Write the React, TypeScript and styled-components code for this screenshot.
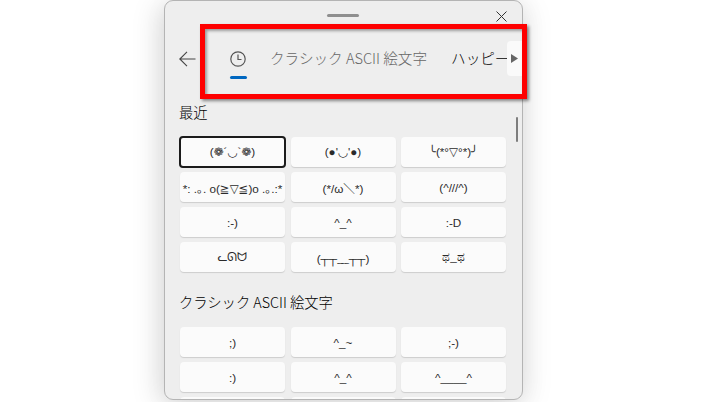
import React from "react";
import styled, { createGlobalStyle } from "styled-components";

const Global = createGlobalStyle`
  html, body { margin: 0; padding: 0; background: #fff; }
  body { width: 716px; height: 402px; overflow: hidden; font-family: "Noto Sans CJK JP", "Noto Sans", sans-serif; }
`;

const Stage = styled.div`
  position: relative;
  width: 716px;
  height: 402px;
  overflow: hidden;
  padding-left: 164px;
  box-sizing: border-box;
`;

const Panel = styled.div`
  width: 359px;
  height: 400px;
  box-sizing: border-box;
  background: #eeeeee;
  border: 1px solid #b4b4b4;
  border-radius: 9px;
  box-shadow: -6px 4px 28px rgba(0, 0, 0, 0.13), 6px 4px 28px rgba(0, 0, 0, 0.08);
  overflow: hidden;
  display: flex;
  flex-direction: column;
  position: relative;
`;

const TitleBar = styled.div`
  height: 28px;
  flex: none;
  display: flex;
  align-items: center;
  justify-content: center;
  position: relative;
`;

const Handle = styled.div`
  width: 32px;
  height: 3px;
  border-radius: 2px;
  background: #8f8f8f;
  margin-top: 1px;
  margin-right: 1px;
`;

const CloseButton = styled.div`
  position: absolute;
  top: 10px;
  right: 15px;
  width: 11px;
  height: 11px;
  color: #333;
  display: flex;
`;

const TabBar = styled.div`
  height: 68px;
  flex: none;
  display: flex;
  align-items: flex-start;
  position: relative;
  overflow: hidden;
`;

const BackButton = styled.div`
  width: 17px;
  height: 16px;
  margin: 22px 0 0 14px;
  color: #444;
  flex: none;
  display: flex;
`;

const ClockTab = styled.div`
  width: 18px;
  margin: 22px 0 0 33px;
  flex: none;
  display: flex;
  flex-direction: column;
  align-items: center;
  color: #555;
`;

const Underline = styled.div`
  width: 17px;
  height: 3px;
  margin-top: 9px;
  border-radius: 2px;
  background: #0067c0;
`;

const TextTab = styled.div<{ $active?: boolean }>`
  flex: none;
  font-size: 14.6px;
  font-weight: 300;
  line-height: 20px;
  margin-top: 19px;
  margin-left: ${(p) => (p.$active ? "24px" : "23px")};
  color: ${(p) => (p.$active ? "#000" : "#666")};
  white-space: nowrap;
`;

const ScrollArrow = styled.div`
  position: absolute;
  right: 0;
  top: 12px;
  width: 15px;
  height: 35px;
  background: #fafafa;
  border-radius: 4px 0 0 4px;
  display: flex;
  align-items: center;
  justify-content: center;
  color: #666;
`;

const Body = styled.div`
  flex: 1;
  min-height: 0;
  padding: 5px 15px 0;
  position: relative;
`;

const Heading = styled.div<{ $gap?: number }>`
  font-size: 14.3px;
  font-weight: 300;
  line-height: 20px;
  color: #000;
  margin-left: -1px;
  margin-top: ${(p) => p.$gap ?? 0}px;
  margin-bottom: 15px;
`;

const Grid = styled.div`
  display: grid;
  grid-template-columns: 105px 105px 105px;
  column-gap: 5.5px;
  row-gap: 5px;
`;

const Cell = styled.div<{ $selected?: boolean }>`
  height: ${(p) => (p.$selected ? "32px" : "30px")};
  margin: ${(p) => (p.$selected ? "-1px" : "0")};
  box-sizing: border-box;
  background: #fbfbfb;
  border-radius: 4px;
  border: ${(p) => (p.$selected ? "2px solid #1b1b1b" : "none")};
  box-shadow: ${(p) => (p.$selected ? "none" : "0 1px 1px rgba(0,0,0,0.14)")};
  display: flex;
  align-items: center;
  justify-content: center;
  font-family: "Liberation Sans", "DejaVu Sans", "Noto Sans CJK JP", sans-serif;
  font-size: 11.7px;
  color: #2a2a2a;
  white-space: nowrap;
  overflow: hidden;
`;

const ScrollThumb = styled.div`
  position: absolute;
  top: 20px;
  right: 4px;
  width: 2px;
  height: 25px;
  background: #7d7d7d;
  border-radius: 1px;
`;

const Highlight = styled.div`
  position: absolute;
  left: 200px;
  top: 24px;
  width: 317px;
  height: 65px;
  border: 5px solid #fe0000;
  box-shadow: 2px 2px 3px rgba(0, 0, 0, 0.45), inset 2px 2px 3px rgba(0, 0, 0, 0.35);
`;

const recent = [
  "(❁´◡`❁)", "(●'◡'●)", "╰(*°▽°*)╯",
  "*: .｡. o(≧▽≦)o .｡.:*", "(*/ω＼*)", "(^///^)",
  ":-)", "^_^", ":-D",
  "ᓚᘏᗢ", "(┬┬﹏┬┬)", "ಥ_ಥ",
];
const classic = [";)", "^_~", ";-)", ":)", "^_^", "^____^", "", " ", "  "];

export default function App() {
  return (
    <Stage>
      <Global />
      <Panel>
        <TitleBar>
          <Handle />
          <CloseButton>
            <svg viewBox="0 0 11 11" width="11" height="11" fill="none" stroke="currentColor" strokeWidth="1">
              <path d="M0.5 0.5L10.5 10.5M10.5 0.5L0.5 10.5" />
            </svg>
          </CloseButton>
        </TitleBar>
        <TabBar>
          <BackButton>
            <svg viewBox="0 0 17 16" width="17" height="16" fill="none" stroke="currentColor" strokeWidth="1.1">
              <path d="M0.8 8H16.5M8 0.8L0.8 8L8 15.2" />
            </svg>
          </BackButton>
          <ClockTab>
            <svg viewBox="0 0 16 16" width="16" height="16" fill="none" stroke="currentColor" strokeWidth="1.2">
              <circle cx="8" cy="8" r="7.2" />
              <path d="M8 3.5V8.5H11.5" />
            </svg>
            <Underline />
          </ClockTab>
          <TextTab>クラシック ASCII 絵文字</TextTab>
          <TextTab $active>ハッピー</TextTab>
          <ScrollArrow>
            <svg viewBox="0 0 7 9" width="7" height="9" fill="currentColor">
              <path d="M0 0L7 4.5L0 9Z" />
            </svg>
          </ScrollArrow>
        </TabBar>
        <Body>
          <ScrollThumb />
          <Heading>最近</Heading>
          <Grid>
            {recent.map((t, i) => (
              <Cell key={t} $selected={i === 0}>{t}</Cell>
            ))}
          </Grid>
          <Heading $gap={20}>クラシック ASCII 絵文字</Heading>
          <Grid>
            {classic.map((t) => (
              <Cell key={t}>{t}</Cell>
            ))}
          </Grid>
        </Body>
      </Panel>
      <Highlight />
    </Stage>
  );
}
